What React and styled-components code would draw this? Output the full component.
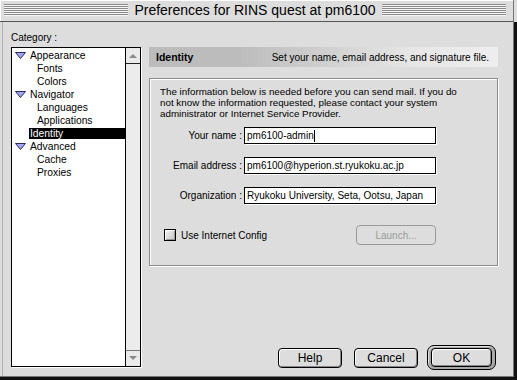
import React from 'react';
import styled, { createGlobalStyle } from 'styled-components';

const GlobalStyle = createGlobalStyle`
  html, body { margin: 0; padding: 0; background: #dddddd; }
  body {
    width: 517px; height: 380px; overflow: hidden;
    font-family: "Liberation Sans", Arial, sans-serif;
    -webkit-font-smoothing: none;
  }
`;

const Window = styled.div`
  width: 517px;
  height: 380px;
  box-sizing: border-box;
  display: flex;
  flex-direction: column;
  background: #dddddd;
`;

const TitleBar = styled.div`
  height: 22px;
  box-sizing: border-box;
  display: flex;
  align-items: center;
  gap: 4px;
  padding: 0 7px 1px 4px;
  border-bottom: 1px solid #555;
  border-right: 1px solid #777;
  margin-right: 3px;
  background: #dddddd;
  box-shadow: inset 1px 1px 0 #fff;
`;

const Stripes = styled.div`
  flex: 1;
  height: 12px;
  background: repeating-linear-gradient(to bottom, #8a8a8a 0 1px, #f6f6f6 1px 2px);
`;

const Title = styled.div`
  font-size: 14px;
  color: #000;
  white-space: nowrap;
  padding: 0 2px;
`;

const Body = styled.div`
  flex: 1;
  box-sizing: border-box;
  display: grid;
  grid-template-columns: 131px 349px;
  grid-template-rows: auto 1fr;
  column-gap: 7px;
  padding: 10px 0 10px 11px;
  border-right: 3px solid #111;
  border-bottom: 3px solid #111;
  box-shadow: inset -1px -1px 0 #777, inset 2px 0 0 #ddd, inset 3px 0 0 #b0b0b0;
`;

const CategoryLabel = styled.div`
  grid-column: 1;
  grid-row: 1;
  font-size: 10px;
  line-height: 12px;
  height: 12px;
  margin-bottom: 3px;
  color: #000;
`;

const ListBox = styled.div`
  grid-column: 1;
  grid-row: 2;
  width: 130px;
  box-sizing: border-box;
  border: 1px solid #000;
  display: flex;
  background: #fff;
  box-shadow: 1px 1px 0 #fff;
`;

const Tree = styled.div`
  flex: 1;
  padding-top: 1px;
  display: flex;
  flex-direction: column;
`;

const Row = styled.div`
  height: 13px;
  display: flex;
  align-items: center;
  padding-left: ${p => p.$indent}px;
  font-size: 10.3px;
`;

const Twisty = styled.svg`
  width: 11px;
  height: 7px;
  margin-right: 3px;
  flex: none;
`;

const ItemLabel = styled.span`
  flex: 1;
  height: 11px;
  line-height: 11px;
  padding-left: 1px;
  background: ${p => (p.$selected ? '#000' : 'transparent')};
  color: ${p => (p.$selected ? '#fff' : '#000')};
  white-space: nowrap;
`;

const ScrollBar = styled.div`
  width: 14px;
  border-left: 1px solid #000;
  background: #ececec;
  display: flex;
  flex-direction: column;
  justify-content: space-between;
`;

const ArrowBox = styled.div`
  height: 15px;
  display: flex;
  align-items: center;
  justify-content: center;
  border-bottom: ${p => (p.$top ? '1px solid #222' : 'none')};
  border-top: ${p => (p.$top ? 'none' : '1px solid #777')};
  background: #eaeaea;
`;

const RightPanel = styled.div`
  grid-column: 2;
  grid-row: 2;
  display: flex;
  flex-direction: column;
`;

const Header = styled.div`
  height: 20px;
  box-sizing: border-box;
  display: flex;
  align-items: center;
  justify-content: space-between;
  padding: 0 9px 0 7px;
  background: linear-gradient(90deg, #bcbcbc 0%, #bcbcbc 25%, #cfcfcf 50%, #e6e6e6 75%, #eeeeee 100%);
  font-size: 10px;
`;

const HeaderTitle = styled.span`
  font-weight: bold;
  font-size: 10.5px;
`;

const GroupBox = styled.div`
  margin-top: 11px;
  height: 188px;
  box-sizing: border-box;
  border: 1px solid #8a8a8a;
  box-shadow: inset 1px 1px 0 #fff, 1px 1px 0 #fff;
  padding: 7px 61px 0 10px;
  display: flex;
  flex-direction: column;
`;

const Paragraph = styled.p`
  margin: 0 -55px 0 0;
  font-size: 9.8px;
  line-height: 11px;
  white-space: nowrap;
  color: #000;
`;

const Form = styled.div`
  margin-top: 8px;
  display: flex;
  flex-direction: column;
  gap: 13px;
`;

const FieldRow = styled.div`
  display: grid;
  grid-template-columns: 82px 192px;
  column-gap: 2px;
  align-items: center;
`;

const FieldLabel = styled.span`
  text-align: right;
  font-size: 10px;
  white-space: nowrap;
`;

const Field = styled.div`
  height: 17px;
  box-sizing: border-box;
  border: 1px solid #000;
  background: #fff;
  box-shadow: 1px 1px 0 #fff;
  display: flex;
  align-items: center;
  padding-left: 2px;
  font-size: 10px;
  white-space: nowrap;
  overflow: hidden;
`;

const Caret = styled.span`
  display: inline-block;
  width: 1px;
  height: 12px;
  background: #000;
`;

const CheckRow = styled.div`
  margin-top: 21px;
  display: flex;
  align-items: center;
  justify-content: space-between;
  padding-left: 4px;
`;

const CheckLabel = styled.label`
  display: flex;
  align-items: center;
  gap: 5px;
  font-size: 10px;
`;

const CheckBox = styled.span`
  width: 12px;
  height: 12px;
  box-sizing: border-box;
  border: 1px solid #000;
  background: linear-gradient(135deg, #f4f4f4, #c4c4c4);
  box-shadow: inset 1px 1px 0 #fff, inset -1px -1px 0 #999;
`;

const LaunchButton = styled.div`
  width: 80px;
  height: 20px;
  box-sizing: border-box;
  border: 1px solid #9a9a9a;
  border-radius: 4px;
  display: flex;
  align-items: center;
  justify-content: center;
  color: #9a9a9a;
  font-size: 10px;
`;

const ButtonRow = styled.div`
  margin-top: auto;
  margin-bottom: -3px;
  padding-right: 2px;
  display: flex;
  justify-content: flex-end;
  align-items: center;
  gap: 9px;
`;

const Button = styled.div`
  width: ${p => p.$w || 64}px;
  height: ${p => p.$h || 20}px;
  box-sizing: border-box;
  border: 1px solid #000;
  border-radius: 4px;
  background: #dddddd;
  box-shadow: inset 1px 1px 0 #fff, inset -1px -1px 0 #888;
  display: flex;
  align-items: center;
  justify-content: center;
  font-size: 12px;
  margin-right: ${p => p.$mr || 0}px;
`;

const DefaultRing = styled.div`
  width: 69px;
  height: 25px;
  box-sizing: border-box;
  border: 1px solid #000;
  border-radius: 7px;
  padding: 2px 3px;
  background: #a8a8a8;
  box-shadow: inset 1px 1px 0 #e0e0e0;
  display: flex;
`;

const items = [
  { label: 'Appearance', indent: 3, twisty: true },
  { label: 'Fonts', indent: 24 },
  { label: 'Colors', indent: 24 },
  { label: 'Navigator', indent: 3, twisty: true },
  { label: 'Languages', indent: 24 },
  { label: 'Applications', indent: 24 },
  { label: 'Identity', indent: 17, selected: true },
  { label: 'Advanced', indent: 3, twisty: true },
  { label: 'Cache', indent: 24 },
  { label: 'Proxies', indent: 24 },
];

function Disclosure() {
  return (
    <Twisty viewBox="0 0 11 7">
      <polygon points="0.5,0.5 10.5,0.5 5.5,6.5" fill="#a4a4f4" stroke="#2a2a5a" strokeWidth="1" />
    </Twisty>
  );
}

function Arrow({ up }) {
  return (
    <svg width="8" height="5" viewBox="0 0 8 5">
      {up ? (
        <polygon points="0,5 8,5 4,1" fill="#8a8a8a" />
      ) : (
        <polygon points="0,0 8,0 4,4" fill="#8a8a8a" />
      )}
    </svg>
  );
}

export default function App() {
  return (
    <>
      <GlobalStyle />
      <Window>
        <TitleBar>
          <Stripes />
          <Title>Preferences for RINS quest at pm6100</Title>
          <Stripes />
        </TitleBar>
        <Body>
          <CategoryLabel>Category :</CategoryLabel>
          <ListBox>
            <Tree>
              {items.map(it => (
                <Row key={it.label} $indent={it.indent}>
                  {it.twisty && <Disclosure />}
                  <ItemLabel $selected={it.selected}>{it.label}</ItemLabel>
                </Row>
              ))}
            </Tree>
            <ScrollBar>
              <ArrowBox $top><Arrow up /></ArrowBox>
              <ArrowBox><Arrow /></ArrowBox>
            </ScrollBar>
          </ListBox>
          <RightPanel>
            <Header>
              <HeaderTitle>Identity</HeaderTitle>
              <span>Set your name, email address, and signature file.</span>
            </Header>
            <GroupBox>
              <Paragraph>
                The information below is needed before you can send mail. If you do<br />
                not know the information requested, please contact your system<br />
                administrator or Internet Service Provider.
              </Paragraph>
              <Form>
                <FieldRow>
                  <FieldLabel>Your name :</FieldLabel>
                  <Field>pm6100-admin<Caret /></Field>
                </FieldRow>
                <FieldRow>
                  <FieldLabel>Email address :</FieldLabel>
                  <Field>pm6100@hyperion.st.ryukoku.ac.jp</Field>
                </FieldRow>
                <FieldRow>
                  <FieldLabel>Organization :</FieldLabel>
                  <Field>Ryukoku University, Seta, Ootsu, Japan</Field>
                </FieldRow>
              </Form>
              <CheckRow>
                <CheckLabel>
                  <CheckBox />
                  Use Internet Config
                </CheckLabel>
                <LaunchButton>Launch...</LaunchButton>
              </CheckRow>
            </GroupBox>
            <ButtonRow>
              <Button $mr={3}>Help</Button>
              <Button>Cancel</Button>
              <DefaultRing>
                <Button $w={61} $h={19}>OK</Button>
              </DefaultRing>
            </ButtonRow>
          </RightPanel>
        </Body>
      </Window>
    </>
  );
}
